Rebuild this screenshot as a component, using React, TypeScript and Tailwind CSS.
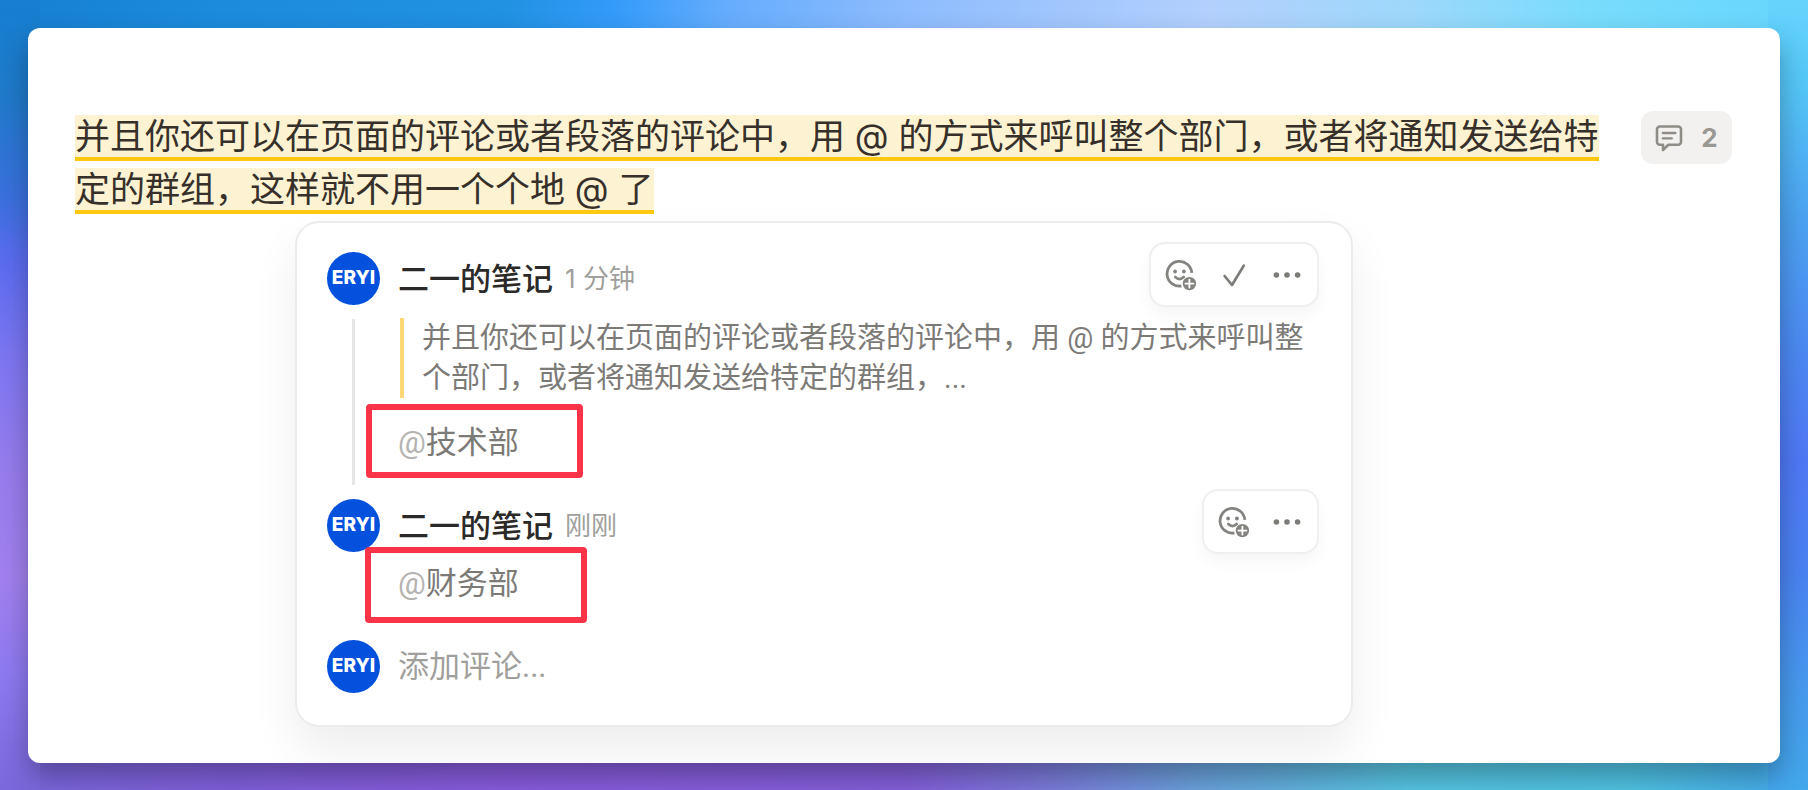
import React from 'react';

const Avatar: React.FC = () => (
  <div className="relative z-10 flex h-[53px] w-[53px] shrink-0 items-center justify-center rounded-full bg-[#0351dd] text-[19px] font-extrabold text-white">
    ERYI
  </div>
);

const SmileAddIcon: React.FC = () => (
  <svg viewBox="0 0 32 32" className="h-8 w-8" fill="none" stroke="#84837f" strokeLinecap="round">
    <path d="M26.8 13.8A12.4 12.4 0 1 0 16.4 27" strokeWidth="2.8" strokeLinecap="butt" />
    <circle cx="10.1" cy="12.5" r="1.9" fill="#84837f" stroke="none" />
    <circle cx="18.9" cy="12.5" r="1.9" fill="#84837f" stroke="none" />
    <path d="M10.3 18Q14.5 22.2 18.7 18" strokeWidth="2.6" />
    <circle cx="24.4" cy="24.6" r="6.7" fill="#84837f" stroke="none" />
    <path d="M24.4 20.6v8M20.4 24.6h8" stroke="#fff" strokeWidth="1.8" />
  </svg>
);

const CheckIcon: React.FC = () => (
  <svg viewBox="0 0 32 32" className="h-8 w-8" fill="none" stroke="#7c7b77" strokeWidth="2.7" strokeLinecap="round" strokeLinejoin="round">
    <path d="M6.6 17L14 26L25.8 6.6" />
  </svg>
);

const DotsIcon: React.FC = () => (
  <svg viewBox="0 0 32 32" className="h-8 w-8" fill="#7c7b77">
    <circle cx="5.4" cy="16" r="2.8" />
    <circle cx="16" cy="16" r="2.8" />
    <circle cx="26.6" cy="16" r="2.8" />
  </svg>
);

const CommentIcon: React.FC = () => (
  <svg viewBox="0 0 28 28" className="h-7 w-7" fill="none" stroke="#8f8c88" strokeWidth="2.6" strokeLinecap="round" strokeLinejoin="round">
    <path d="M4.8 2.5h18.4a2.8 2.8 0 0 1 2.8 2.8v12.6a2.8 2.8 0 0 1-2.8 2.8H13.4L8 26V20.7H4.8A2.8 2.8 0 0 1 2 17.9V5.3a2.8 2.8 0 0 1 2.8-2.8Z" />
    <path d="M7.8 9h12.6M7.8 14.4h9" strokeWidth="2.3" />
  </svg>
);

interface ToolbarProps {
  resolvable?: boolean;
}

const Toolbar: React.FC<ToolbarProps> = ({ resolvable }) => (
  <div className="absolute -top-[10px] right-0.5 flex h-[65px] items-center gap-[21px] rounded-2xl border-2 border-[#efefee] bg-white px-[14px] shadow-[0_8px_16px_rgba(0,0,0,0.04)]">
    <button type="button" aria-label="表情">
      <SmileAddIcon />
    </button>
    {resolvable && (
      <button type="button" aria-label="完成">
        <CheckIcon />
      </button>
    )}
    <button type="button" aria-label="更多">
      <DotsIcon />
    </button>
  </div>
);

interface CommentHeaderProps {
  time: string;
  resolvable?: boolean;
}

const CommentHeader: React.FC<CommentHeaderProps> = ({ time, resolvable }) => (
  <header className="relative flex items-center">
    <Avatar />
    <h2 className="ml-[18px] text-[31px] leading-[53px] font-medium text-[#2b2a28]">二一的笔记</h2>
    <span className="ml-3 text-[26px] leading-[53px] text-[#a09f9c]">{time}</span>
    <Toolbar resolvable={resolvable} />
  </header>
);

// One gradient per edge, each a little wider than the margin so the card's round corners stay filled
const BACKDROP =
  '[background:linear-gradient(180deg,#167fd0_0%,#1f7acb_12%,#3a70de_25%,#5b6cf0_33%,#7d76f2_45%,#957cee_58%,#a280ee_73%,#8e7af2_85%,#7a68dc_100%)_left/40px_100%_no-repeat,linear-gradient(180deg,#66d5fd_0%,#55c8f8_10%,#4ca2f2_28%,#4c88f2_45%,#4f78f5_58%,#4a82f2_72%,#4798ee_86%,#43a8ec_100%)_right/40px_100%_no-repeat,linear-gradient(90deg,#167fd0_0%,#1c8bdb_12%,#2191e2_28%,#339bfa_34%,#64acfd_40%,#8dbcfd_50%,#b3d0fd_67%,#9dd8fb_78%,#78dcfc_88%,#66d5fd_100%)_top/100%_40px_no-repeat,linear-gradient(90deg,#7a68dc_0%,#8060dc_12%,#8a5ce0_28%,#8560dc_50%,#7c7cdc_58%,#6ca2de_66%,#56c6e2_78%,#50c4e4_90%,#43a8ec_100%)_bottom/100%_40px_no-repeat]';

const App: React.FC = () => {
  return (
    <div className={`flex min-h-screen p-7 font-[Inter,'Noto_Sans_CJK_SC',sans-serif] ${BACKDROP}`}>
      <main className="flex-1 rounded-xl bg-white px-[47px] pt-[82px] pb-9 shadow-[0_14px_28px_rgba(0,0,0,0.3)]">
        <div className="flex items-start">
          <p className="w-[1532px] text-[35px] leading-[53px] text-[#37302a]">
            <span className="border-b-4 border-[#fdc80f] bg-[#fdf3d3]">
              并且你还可以在页面的评论或者段落的评论中，用 @ 的方式来呼叫整个部门，或者将通知发送给特定的群组，这样就不用一个个地 @ 了
            </span>
          </p>
          <button type="button" className="mt-px mr-px ml-auto flex h-[53px] w-[91px] items-center justify-center gap-[18px] rounded-xl bg-[#f3f1f0] text-[26px] font-bold text-[#9b9894]">
            <CommentIcon />
            2
          </button>
        </div>

        <section className="mt-[5px] ml-[220px] w-[1058px] rounded-3xl border-2 border-[#ececec] bg-white px-[30px] pt-[29px] pb-8 shadow-[0_24px_48px_rgba(0,0,0,0.07)]">
          <article className="relative h-[247px]">
            <CommentHeader time="1 分钟" resolvable />
            <div className="absolute top-[67px] left-[25px] h-[166px] w-[3px] bg-[#e6e6e5]" />
            <blockquote className="mt-[13px] ml-[73px] border-l-4 border-[#ffd774] pl-[18px] font-[Roboto,'Noto_Sans_CJK_SC',sans-serif] text-[29px] leading-10 text-[#7c7a77]">
              并且你还可以在页面的评论或者段落的评论中，用 @ 的方式来呼叫整个部门，或者将通知发送给特定的群组，...
            </blockquote>
            <div className="relative mt-[22px] ml-[71px] font-[Roboto,'Noto_Sans_CJK_SC',sans-serif] text-[31px] leading-[46px] text-[#7c7a77]">
              <span className="text-[#b4b3b0]">@</span>技术部
              <div className="absolute -top-4 -left-8 h-[74px] w-[217px] rounded-sm border-6 border-[#fa3448]" />
            </div>
          </article>

          <article className="h-[141px]">
            <CommentHeader time="刚刚" />
            <div className="relative mt-[9px] ml-[71px] font-[Roboto,'Noto_Sans_CJK_SC',sans-serif] text-[31px] leading-[46px] text-[#7c7a77]">
              <span className="text-[#b4b3b0]">@</span>财务部
              <div className="absolute -top-[14px] -left-[33px] z-20 h-[76px] w-[222px] rounded-sm border-6 border-[#fa3448]" />
            </div>
          </article>

          <label className="flex items-center">
            <Avatar />
            <input
              type="text"
              aria-label="添加评论"
              placeholder="添加评论..."
              className="ml-[18px] h-[53px] flex-1 bg-transparent font-[Roboto,'Noto_Sans_CJK_SC',sans-serif] text-[31px] text-[#7c7a77] outline-none placeholder:text-[#a09f9c]"
            />
          </label>
        </section>
      </main>
    </div>
  );
};

export default App;
